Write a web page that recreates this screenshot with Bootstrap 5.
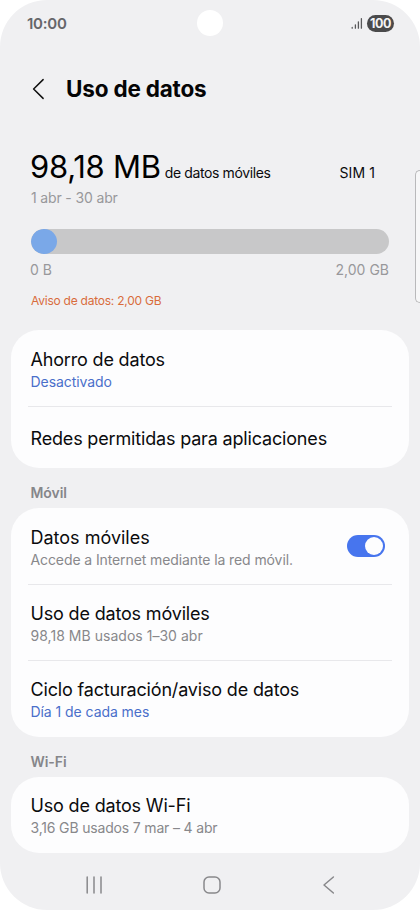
<!DOCTYPE html>
<html lang="es">
<head>
<meta charset="utf-8">
<meta name="viewport" content="width=device-width, initial-scale=1">
<title>Uso de datos</title>
<link href="https://cdn.jsdelivr.net/npm/bootstrap@5.3.0/dist/css/bootstrap.min.css" rel="stylesheet">
<style>
  body { background: #fff; font-family: Inter, "Noto Sans", sans-serif; color: #0b0b0d; }
  .phone { width: 420px; height: 910px; background: #f0f0f2; border-radius: 47px; }
  .status-bar { height: 47px; padding: 0 26px 0 27px; }
  .clock { font-size: 15px; font-weight: 600; color: #66666a; letter-spacing: -.25px; padding-top: 1px; }
  .camera { left: 197px; top: 10px; width: 26px; height: 26px; }
  .battery { width: 27px; height: 17px; background: #4a4a4b; color: #f4f4f4; font-size: 12.5px; font-weight: 700; letter-spacing: -.4px; line-height: 17px; }
  .app-header { height: 83px; padding-left: 31px; }
  .app-header h1 { font-size: 22.5px; font-weight: 700; letter-spacing: -.2px; margin-left: 19px; color: #050506; }
  .usage { padding: 18px 31px 0 30px; height: 200px; }
  .amount { font-size: 31px; line-height: 37px; letter-spacing: -.25px; color: #000; }
  .amount-note { font-size: 14px; letter-spacing: -.38px; margin-left: 4px; }
  .sim { font-size: 14px; letter-spacing: .1px; margin-right: 14px; }
  .soft { font-size: 14px; line-height: 20px; color: #98989b; }
  .period { margin: 3px 0 0 1px; letter-spacing: -.15px; }
  .meter { height: 25px; margin: 21px 0 6px 1px; background: #c8c8c9; border-radius: 13px; }
  .meter .progress-bar { background: #7aa8e8; border-radius: 13px; }
  .alert-line { margin-top: 11px; padding-left: 1px; font-size: 12px; line-height: 20px; letter-spacing: -.24px; color: #d96c3c; }
  .group { margin: 0 11px; background: #fdfdfe; border-radius: 28px; }
  .entry { padding: 3px 20px 0 19.5px; position: relative; }
  .entry + .entry { border-top: 1px solid transparent; background: linear-gradient(#e8e8eb, #e8e8eb) 17px 0 / calc(100% - 34px) 1px no-repeat border-box; }
  .entry-title { font-size: 18px; line-height: 24px; letter-spacing: -.17px; color: #0b0b0d; }
  .entry-sub { font-size: 14px; line-height: 20px; color: #88888b; letter-spacing: -.1px; }
  .title-wide { letter-spacing: 0; }
  .sub-wide { letter-spacing: .03px; }
  .sub-tight { letter-spacing: -.17px; }
  .entry-sub.linkish { color: #4a6fca; letter-spacing: -.06px; }
  .section-label { font-size: 14px; font-weight: 600; line-height: 20px; color: #86868a; height: 40.5px; padding: 15.5px 30.5px 0; letter-spacing: -.05px; }
  .h-saver { height: 76px; } .h-single { height: 61.5px; } .h-toggle { height: 76px; }
  .h-use { height: 76px; } .h-cycle { height: 76.5px; } .h-wifi { height: 75.5px; }
  .toggle { width: 38px; height: 22px; background: #4775ee; padding: 2px; margin: 0 4px 3px 0; }
  .toggle span { width: 18px; height: 18px; background: #fdfdfe; }
  .edge-handle { left: 415px; top: 170px; width: 5px; height: 133px; border: 1px solid #b9b9bb; border-right: 0; border-radius: 5px 0 0 5px; background: #f7f7f8; }
  .nav-keys { height: 57.5px; padding: 8px 84px 0 84px; }
</style>
<script src="https://cdn.jsdelivr.net/npm/bootstrap@5.3.0/dist/js/bootstrap.bundle.min.js"></script>
</head>
<body>
<main class="phone position-relative overflow-hidden d-flex flex-column">
  <div class="status-bar d-flex align-items-center justify-content-between">
    <span class="clock">10:00</span>
    <div class="d-flex align-items-center gap-1">
      <svg width="13" height="13" viewBox="0 0 13 13" stroke="#59595b" stroke-width="1.3" stroke-linecap="round"><path d="M2.2 11.2v-.8M5.4 11.2V7.8M8.4 11.2V4.8M11.4 11.2V1.6"/></svg>
      <span class="battery rounded-pill text-center">100</span>
    </div>
  </div>
  <div class="camera position-absolute bg-white rounded-circle"></div>

  <header class="app-header d-flex align-items-center">
    <svg width="16" height="22" viewBox="0 0 16 22" fill="none" stroke="#111" stroke-width="1.5" stroke-linecap="round" stroke-linejoin="round"><path d="M12.1 1.6 2.6 11l9.5 9.4"/></svg>
    <h1 class="mb-0">Uso de datos</h1>
  </header>

  <section class="usage">
    <div class="d-flex align-items-baseline">
      <span class="amount">98,18 MB</span>
      <span class="amount-note">de datos móviles</span>
      <span class="sim ms-auto">SIM 1</span>
    </div>
    <div class="soft period">1 abr - 30 abr</div>
    <div class="progress meter"><div class="progress-bar" style="width:7.3%"></div></div>
    <div class="soft d-flex justify-content-between"><span>0 B</span><span>2,00 GB</span></div>
    <div class="alert-line">Aviso de datos: 2,00 GB</div>
  </section>

  <section class="group">
    <div class="entry h-saver d-flex flex-column justify-content-center">
      <div class="entry-title">Ahorro de datos</div>
      <div class="entry-sub linkish">Desactivado</div>
    </div>
    <div class="entry h-single d-flex align-items-center">
      <div class="entry-title">Redes permitidas para aplicaciones</div>
    </div>
  </section>

  <div class="section-label">Móvil</div>
  <section class="group">
    <div class="entry h-toggle d-flex align-items-center justify-content-between">
      <div>
        <div class="entry-title title-wide">Datos móviles</div>
        <div class="entry-sub">Accede a Internet mediante la red móvil.</div>
      </div>
      <div class="toggle rounded-pill d-flex justify-content-end" role="switch" aria-checked="true"><span class="rounded-circle"></span></div>
    </div>
    <div class="entry h-use d-flex flex-column justify-content-center">
      <div class="entry-title">Uso de datos móviles</div>
      <div class="entry-sub sub-wide">98,18 MB usados 1–30 abr</div>
    </div>
    <div class="entry h-cycle d-flex flex-column justify-content-center">
      <div class="entry-title">Ciclo facturación/aviso de datos</div>
      <div class="entry-sub linkish">Día 1 de cada mes</div>
    </div>
  </section>

  <div class="section-label">Wi-Fi</div>
  <section class="group">
    <div class="entry h-wifi d-flex flex-column justify-content-center">
      <div class="entry-title">Uso de datos Wi-Fi</div>
      <div class="entry-sub sub-tight">3,16 GB usados 7 mar – 4 abr</div>
    </div>
  </section>

  <nav class="nav-keys d-flex align-items-center justify-content-between">
    <svg width="20" height="20" viewBox="0 0 20 20" stroke="#88888b" stroke-width="1.5" stroke-linecap="round"><path d="M3.2 2v16M10 2v16M17 2v16"/></svg>
    <svg width="20" height="20" viewBox="0 0 20 20" fill="none" stroke="#88888b" stroke-width="1.5"><rect x="2" y="2" width="16" height="16" rx="5"/></svg>
    <svg width="16" height="20" viewBox="0 0 16 20" fill="none" stroke="#88888b" stroke-width="1.5" stroke-linecap="round" stroke-linejoin="round"><path d="M13.4 2 4 10l9.4 8"/></svg>
  </nav>
  <div class="edge-handle position-absolute"></div>
</main>
</body>
</html>
